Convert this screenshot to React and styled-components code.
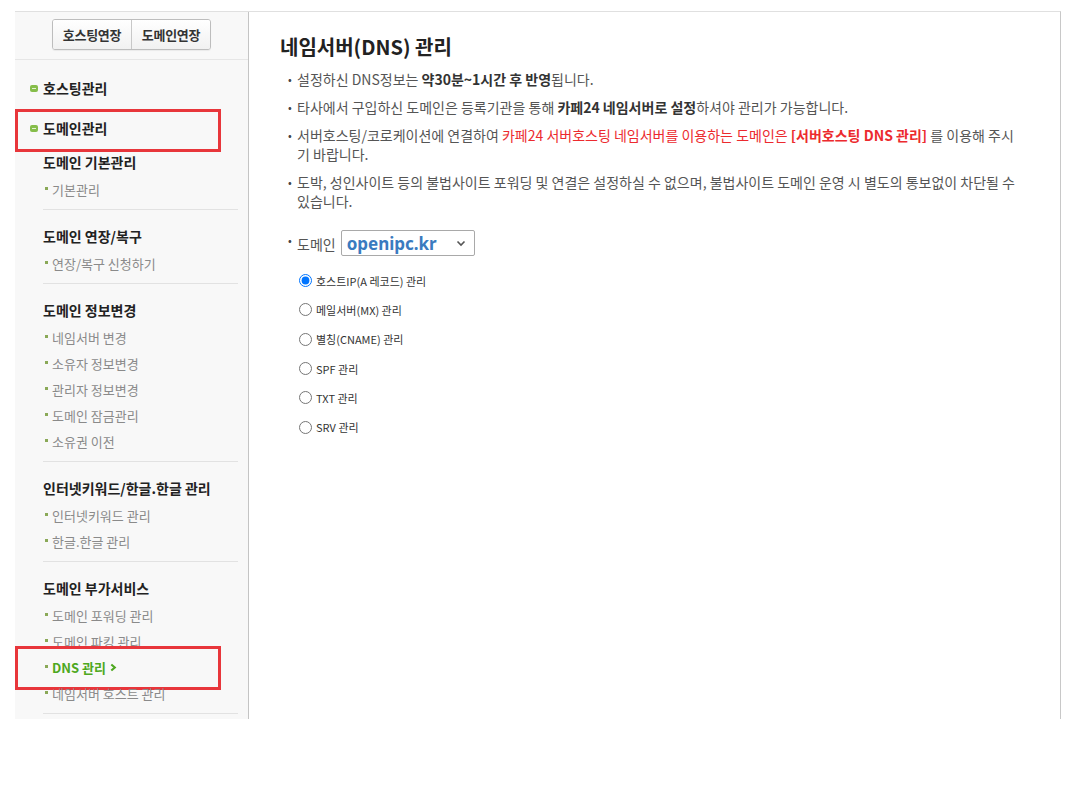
import React from 'react';
import styled, { createGlobalStyle } from 'styled-components';

const GlobalStyle = createGlobalStyle`
  html, body {
    margin: 0;
    padding: 0;
    background: #fff;
  }
  body {
    font-family: "Noto Sans CJK KR", "Noto Sans", sans-serif;
    color: #555;
  }
`;

const sections = [
  { title: '도메인 기본관리', items: ['기본관리'] },
  { title: '도메인 연장/복구', items: ['연장/복구 신청하기'] },
  {
    title: '도메인 정보변경',
    items: ['네임서버 변경', '소유자 정보변경', '관리자 정보변경', '도메인 잠금관리', '소유권 이전']
  },
  { title: '인터넷키워드/한글.한글 관리', items: ['인터넷키워드 관리', '한글.한글 관리'] },
  {
    title: '도메인 부가서비스',
    items: ['도메인 포워딩 관리', '도메인 파킹 관리', 'DNS 관리', '네임서버 호스트 관리']
  }
];

const recordTypes = [
  '호스트IP(A 레코드) 관리',
  '메일서버(MX) 관리',
  '별칭(CNAME) 관리',
  'SPF 관리',
  'TXT 관리',
  'SRV 관리'
];

export default function App() {
  return (
    <>
      <GlobalStyle />
      <Page>
        <Frame>
          <Sidebar>
            <ButtonArea>
              <ButtonGroup>
                <ExtendButton>호스팅연장</ExtendButton>
                <ExtendButton>도메인연장</ExtendButton>
              </ButtonGroup>
            </ButtonArea>

            <Menu>
              <TopItem>
                <GreenMark />
                호스팅관리
              </TopItem>
              <TopItem>
                <GreenMark />
                도메인관리
                <Highlight $top={1} $left={0} $height={43} />
              </TopItem>

              {sections.map((section, i) => (
                <Section key={section.title} $first={i === 0}>
                  <SectionTitle>{section.title}</SectionTitle>
                  {section.items.map(item =>
                    item === 'DNS 관리' ? (
                      <SubItem key={item} $active>
                        {item}
                        <Chevron viewBox="0 0 8 10">
                          <path d="M1.5 1.5 L5.5 5 L1.5 8.5" fill="none" stroke="#4ea820" strokeWidth="2.4" />
                        </Chevron>
                        <Highlight $top={-8} $left={-28} $height={44} />
                      </SubItem>
                    ) : (
                      <SubItem key={item}>{item}</SubItem>
                    )
                  )}
                </Section>
              ))}
            </Menu>
          </Sidebar>

          <Content>
            <Title>네임서버(DNS) 관리</Title>
            <Notes>
              <Note>
                설정하신 DNS정보는 <Strong>약30분~1시간 후 반영</Strong>됩니다.
              </Note>
              <Note>
                타사에서 구입하신 도메인은 등록기관을 통해 <Strong>카페24 네임서버로 설정</Strong>하셔야 관리가
                가능합니다.
              </Note>
              <Note>
                서버호스팅/코로케이션에 연결하여 <Red>카페24 서버호스팅 네임서버를 이용하는 도메인은</Red>{' '}
                <Red $bold>[서버호스팅 DNS 관리]</Red> 를 이용해 주시기 바랍니다.
              </Note>
              <Note>
                도박, 성인사이트 등의 불법사이트 포워딩 및 연결은 설정하실 수 없으며, 불법사이트 도메인 운영 시
                별도의 통보없이 차단될 수 있습니다.
              </Note>
            </Notes>

            <DomainRow>
              <DomainLabel>도메인</DomainLabel>
              <DomainSelect>
                <span>openipc.kr</span>
                <svg width="10" height="7" viewBox="0 0 10 7">
                  <path d="M1.5 1.5 L5 5 L8.5 1.5" fill="none" stroke="#555" strokeWidth="1.6" />
                </svg>
              </DomainSelect>
            </DomainRow>

            <RadioList>
              {recordTypes.map((label, i) => (
                <RadioRow key={label}>
                  <Radio type="radio" name="record" defaultChecked={i === 0} />
                  {label}
                </RadioRow>
              ))}
            </RadioList>
          </Content>
        </Frame>
      </Page>
    </>
  );
}

const Page = styled.div`
  padding: 11px 19px 0 15px;
`;

const Frame = styled.div`
  display: flex;
  width: 1046px;
  height: 708px;
  box-sizing: border-box;
  border-top: 1px solid #e0e0e0;
  border-right: 1px solid #c8c8c8;
`;

const Sidebar = styled.div`
  width: 233px;
  flex-shrink: 0;
  background: #f8f8f8;
  border-right: 1px solid #c4c4c4;
`;

const ButtonArea = styled.div`
  display: flex;
  justify-content: center;
  padding: 7px 0 9px;
  border-bottom: 1px solid #e6e6e6;
`;

const ButtonGroup = styled.div`
  display: flex;
  border: 1px solid #bdbdbd;
  border-radius: 3px;
  overflow: hidden;
  box-shadow: 0 1px 1px rgba(0, 0, 0, 0.06);
`;

const ExtendButton = styled.div`
  width: 78px;
  height: 29px;
  display: flex;
  align-items: center;
  justify-content: center;
  font-size: 13px;
  font-weight: 700;
  color: #333;
  letter-spacing: -0.3px;
  background: linear-gradient(#ffffff, #f1f1f1);
  & + & {
    border-left: 1px solid #c8c8c8;
  }
`;

const Menu = styled.div`
  padding-top: 8px;
`;

const TopItem = styled.div`
  position: relative;
  display: flex;
  align-items: center;
  height: 40px;
  padding-left: 15px;
  font-size: 14px;
  font-weight: 700;
  color: #222;
`;

const GreenMark = styled.span`
  position: relative;
  width: 8px;
  height: 7px;
  margin-right: 5px;
  border-radius: 2px;
  background: #86bd4a;
  &::after {
    content: '';
    position: absolute;
    left: 2px;
    top: 3px;
    width: 4px;
    height: 1px;
    background: #e4f2d4;
  }
`;

const Highlight = styled.span`
  position: absolute;
  top: ${({ $top }) => $top}px;
  left: ${({ $left }) => $left}px;
  width: 206px;
  height: ${({ $height }) => $height}px;
  box-sizing: border-box;
  border: 3px solid #e8363b;
  pointer-events: none;
`;

const Section = styled.div`
  margin: 0 10px 0 28px;
  padding: ${({ $first }) => ($first ? '0' : '12px')} 0 7px;
  border-bottom: 1px solid #e2e2e2;
`;

const SectionTitle = styled.div`
  height: 28px;
  line-height: 28px;
  font-size: 14px;
  font-weight: 700;
  color: #222;
`;

const SubItem = styled.div`
  position: relative;
  display: flex;
  align-items: center;
  height: 26px;
  padding-left: 9px;
  font-size: 13px;
  font-weight: ${({ $active }) => ($active ? 700 : 400)};
  color: ${({ $active }) => ($active ? '#4ea820' : '#8a8a8a')};
  &::before {
    content: '';
    position: absolute;
    left: 2px;
    top: 11px;
    width: 3px;
    height: 3px;
    background: #8aa957;
  }
`;

const Chevron = styled.svg`
  width: 7px;
  height: 9px;
  margin-left: 4px;
`;

const Content = styled.div`
  flex: 1;
  padding: 21px 38px 0 31px;
  background: #fff;
`;

const Title = styled.h1`
  margin: 0;
  height: 28px;
  line-height: 28px;
  font-size: 20px;
  font-weight: 700;
  color: #222;
`;

const Notes = styled.ul`
  list-style: none;
  margin: 9px 0 0;
  padding: 0 0 0 17px;
`;

const Note = styled.li`
  position: relative;
  margin-bottom: 9px;
  font-size: 14px;
  line-height: 19px;
  color: #555;
  word-break: break-all;
  &::before {
    content: '•';
    position: absolute;
    left: -9px;
    top: 0;
    color: #444;
    font-size: 11px;
  }
`;

const Strong = styled.b`
  color: #333;
`;

const Red = styled.span`
  color: #ec2a2e;
  font-weight: ${({ $bold }) => ($bold ? 700 : 400)};
`;

const DomainRow = styled.div`
  display: flex;
  align-items: center;
  margin-top: 19px;
  padding-left: 17px;
  position: relative;
  &::before {
    content: '•';
    position: absolute;
    left: 8px;
    top: 2px;
    color: #444;
    font-size: 11px;
  }
`;

const DomainLabel = styled.span`
  font-size: 14px;
  color: #555;
  margin-right: 5px;
  padding-top: 2px;
`;

const DomainSelect = styled.div`
  display: flex;
  align-items: center;
  justify-content: space-between;
  width: 134px;
  height: 26px;
  box-sizing: border-box;
  padding: 0 8px 0 5px;
  border: 1px solid #a9a9a9;
  border-radius: 2px;
  background: #fff;
  font-family: "Noto Sans", sans-serif;
  font-size: 17px;
  font-weight: 700;
  color: #3a7bbf;
`;

const RadioList = styled.div`
  margin-top: 10px;
  padding-left: 19px;
`;

const RadioRow = styled.label`
  display: flex;
  align-items: center;
  height: 29.3px;
  font-size: 11px;
  color: #333;
`;

const Radio = styled.input`
  width: 13px;
  height: 13px;
  margin: 0 4px 0 0;
`;
